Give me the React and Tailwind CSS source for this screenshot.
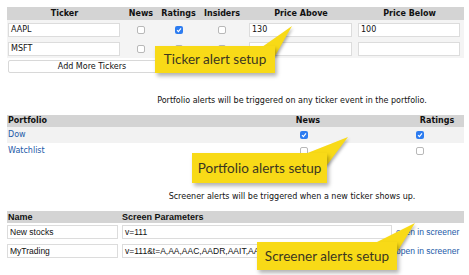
import React from "react";

function Box({ checked }) {
  if (checked) {
    return (
      <span className="flex h-[8px] w-[8px] items-center justify-center rounded-[2px] bg-[#2d7cf0]">
        <svg width="6" height="6" viewBox="0 0 6 6">
          <path d="M1 3.2 L2.4 4.6 L5 1.4" fill="none" stroke="#fff" strokeWidth="1.1" />
        </svg>
      </span>
    );
  }
  return <span className="block h-[8px] w-[8px] rounded-[2px] border border-[#b8b8b8] bg-white" />;
}

function Field({ value, className = "" }) {
  return (
    <div className={"flex h-[14px] items-center border border-[#dcdcdc] bg-white px-[2px] " + className}>
      {value}
    </div>
  );
}

function Callout({ text, box, tip }) {
  // box: [left, top, width, height], tip: points for pointer triangle
  return (
    <>
      <svg
        className="absolute left-0 top-0 drop-shadow-[1px_2px_1.5px_rgba(0,0,0,0.3)]"
        width="469"
        height="275"
      >
        <polygon points={tip} fill="#f8da17" />
      </svg>
      <div
        className="absolute flex items-center justify-center bg-[#f8da17] font-['Lato'] text-[13.5px] text-[#3b3620] shadow-[2px_3px_4px_rgba(0,0,0,0.3)]"
        style={{ left: box[0], top: box[1], width: box[2], height: box[3] }}
      >
        {text}
      </div>
    </>
  );
}

export default function App() {
  const tickers = [
    { t: "AAPL", news: false, ratings: true, insiders: false, above: "130", below: "100" },
    { t: "MSFT", news: false, ratings: false, insiders: false, above: "", below: "" },
  ];

  return (
    <div className="relative h-[275px] w-[469px] overflow-hidden bg-white font-['DejaVu_Sans'] text-[8px] text-[#111]">
      <div className="pl-[7px] pr-[5px] pt-[7px]">
        {/* Ticker alerts */}
        <div className="grid grid-cols-[115px_38px_37px_50px_108px_109px] bg-[#f4f4f4]">
          <div className="col-span-6 grid h-[13px] grid-cols-subgrid items-center bg-[#d4d4d4] font-bold">
            <div className="text-center">Ticker</div>
            <div className="text-center">News</div>
            <div className="text-center">Ratings</div>
            <div className="text-center">Insiders</div>
            <div className="text-center">Price Above</div>
            <div className="text-center">Price Below</div>
          </div>
          {tickers.map((r) => (
            <div key={r.t} className="col-span-6 grid h-[19px] grid-cols-subgrid items-center">
              <Field value={r.t} className="ml-[1px] mr-[2px]" />
              <div className="flex justify-center"><Box checked={r.news} /></div>
              <div className="flex justify-center"><Box checked={r.ratings} /></div>
              <div className="flex justify-center"><Box checked={r.insiders} /></div>
              <Field value={r.above} className="ml-[2px] mr-[3px]" />
              <Field value={r.below} className="ml-[3px] mr-[4px]" />
            </div>
          ))}
        </div>
        <button className="ml-[1px] mt-[2px] flex h-[13px] w-[168px] items-center justify-center rounded-[2px] border border-[#d8d8d8] bg-white text-[8px]">
          Add More Tickers
        </button>

        {/* Portfolio alerts */}
        <div className="mt-[22px] pl-[113px] text-center">
          Portfolio alerts will be triggered on any ticker event in the portfolio.
        </div>
        <div className="mt-[8px] grid grid-cols-[279px_44px_84px_46px_auto]">
          <div className="col-span-5 grid h-[12px] grid-cols-subgrid items-center bg-[#d4d4d4] font-bold">
            <div className="pl-[1px]">Portfolio</div>
            <div className="text-center">News</div>
            <div />
            <div className="text-center">Ratings</div>
            <div />
          </div>
          <div className="col-span-5 grid h-[16px] grid-cols-subgrid items-center bg-[#f2f2f2]">
            <div className="pl-[1px] text-[#1d5aa8]">Dow</div>
            <div className="pl-[14px]"><Box checked /></div>
            <div />
            <div className="pl-[2px]"><Box checked /></div>
            <div />
          </div>
          <div className="col-span-5 grid h-[16px] grid-cols-subgrid items-center">
            <div className="pl-[1px] text-[#1d5aa8]">Watchlist</div>
            <div className="pl-[14px]"><Box /></div>
            <div />
            <div className="pl-[2px]"><Box /></div>
            <div />
          </div>
        </div>

        {/* Screener alerts */}
        <div className="mt-[32px] pl-[113px] text-center">
          Screener alerts will be triggered when a new ticker shows up.
        </div>
        <div className="mt-[8px] grid grid-cols-[114px_273px_70px] font-['Liberation_Sans'] text-[8.5px]">
          <div className="col-span-3 grid h-[12px] grid-cols-subgrid items-center bg-[#d4d4d4] text-[9px] font-bold">
            <div className="pl-[1px]">Name</div>
            <div className="pl-[1px]">Screen Parameters</div>
            <div />
          </div>
          <div className="col-span-3 grid h-[18px] grid-cols-subgrid items-center">
            <Field value="New stocks" className="mr-[3px]" />
            <Field value="v=111" className="ml-[1px] mr-[2px]" />
            <div className="pl-[2px] text-[#1d5aa8]">open in screener</div>
          </div>
          <div className="col-span-3 grid h-[20px] grid-cols-subgrid items-center">
            <Field value="MyTrading" className="mr-[3px]" />
            <Field value="v=111&t=A,AA,AAC,AADR,AAIT,AAL,AAMC,AAME,AAN" className="ml-[1px] mr-[2px] overflow-hidden whitespace-nowrap" />
            <div className="pl-[2px] text-[#1d5aa8]">open in screener</div>
          </div>
        </div>
      </div>

      <Callout text="Ticker alert setup" box={[155, 46, 120, 27]} tip="262,47 292,26 275,56" />
      <Callout text="Portfolio alerts setup" box={[192, 153, 135, 30]} tip="305,154 348,137 327,165" />
      <Callout text="Screener alerts setup" box={[257, 242, 140, 28]} tip="375,243 415,223 397,252" />
    </div>
  );
}
